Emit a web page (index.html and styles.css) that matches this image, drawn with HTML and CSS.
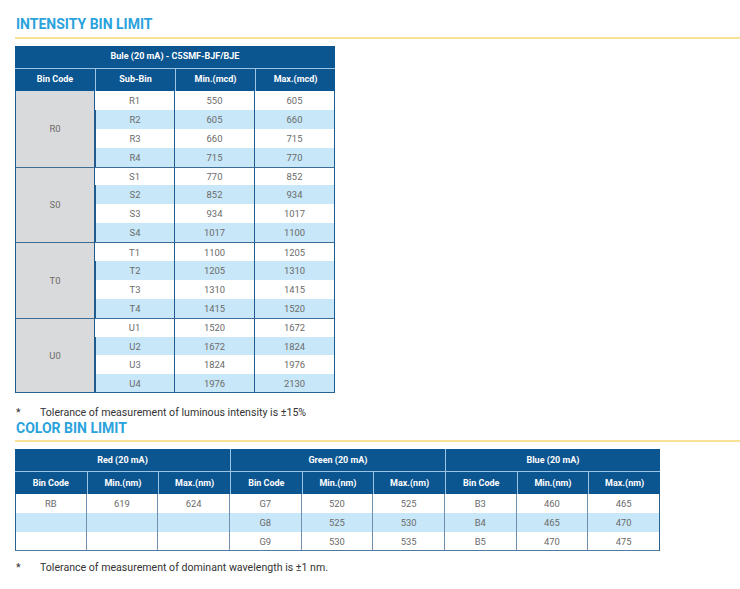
FILE: index.html
```html
<!DOCTYPE html>
<html>
<head>
<meta charset="utf-8">
<link rel="stylesheet" href="styles.css">
</head>
<body>
<div class="page">
  <h2 class="section-title first">INTENSITY BIN LIMIT</h2>
  <table class="bin-table intensity">
    <thead>
      <tr class="cap-row"><th colspan="4">Bule (20 mA) - C5SMF-BJF/BJE</th></tr>
      <tr class="head-row"><th>Bin Code</th><th>Sub-Bin</th><th>Min.(mcd)</th><th>Max.(mcd)</th></tr>
    </thead>
    <tbody>
      <tr class="grp"><td class="code" rowspan="4">R0</td><td>R1</td><td>550</td><td>605</td></tr>
      <tr class="alt"><td>R2</td><td>605</td><td>660</td></tr>
      <tr><td>R3</td><td>660</td><td>715</td></tr>
      <tr class="alt"><td>R4</td><td>715</td><td>770</td></tr>
      <tr class="grp top"><td class="code" rowspan="4">S0</td><td>S1</td><td>770</td><td>852</td></tr>
      <tr class="alt"><td>S2</td><td>852</td><td>934</td></tr>
      <tr><td>S3</td><td>934</td><td>1017</td></tr>
      <tr class="alt"><td>S4</td><td>1017</td><td>1100</td></tr>
      <tr class="grp top"><td class="code" rowspan="4">T0</td><td>T1</td><td>1100</td><td>1205</td></tr>
      <tr class="alt"><td>T2</td><td>1205</td><td>1310</td></tr>
      <tr><td>T3</td><td>1310</td><td>1415</td></tr>
      <tr class="alt"><td>T4</td><td>1415</td><td>1520</td></tr>
      <tr class="grp top"><td class="code last-code" rowspan="4">U0</td><td>U1</td><td>1520</td><td>1672</td></tr>
      <tr class="alt"><td>U2</td><td>1672</td><td>1824</td></tr>
      <tr><td>U3</td><td>1824</td><td>1976</td></tr>
      <tr class="alt last"><td>U4</td><td>1976</td><td>2130</td></tr>
    </tbody>
  </table>
  <p class="note note-1"><span class="star">*</span><span>Tolerance of measurement of luminous intensity is ±15%</span></p>
  <h2 class="section-title second">COLOR BIN LIMIT</h2>
  <table class="bin-table color">
    <thead>
      <tr class="cap-row"><th colspan="3">Red (20 mA)</th><th colspan="3" class="gs">Green (20 mA)</th><th colspan="3" class="gs">Blue (20 mA)</th></tr>
      <tr class="head-row"><th>Bin Code</th><th>Min.(nm)</th><th>Max.(nm)</th><th>Bin Code</th><th>Min.(nm)</th><th>Max.(nm)</th><th>Bin Code</th><th>Min.(nm)</th><th>Max.(nm)</th></tr>
    </thead>
    <tbody>
      <tr><td>RB</td><td>619</td><td>624</td><td>G7</td><td>520</td><td>525</td><td>B3</td><td>460</td><td>465</td></tr>
      <tr class="alt"><td></td><td></td><td></td><td>G8</td><td>525</td><td>530</td><td>B4</td><td>465</td><td>470</td></tr>
      <tr class="last"><td></td><td></td><td></td><td>G9</td><td>530</td><td>535</td><td>B5</td><td>470</td><td>475</td></tr>
    </tbody>
  </table>
  <p class="note note-2"><span class="star">*</span><span>Tolerance of measurement of dominant wavelength is ±1 nm.</span></p>
</div>
</body>
</html>
```
FILE: styles.css
```css
html, body {
  margin: 0;
  padding: 0;
  background: #ffffff;
}
body {
  font-family: Roboto, "Liberation Sans", Arial, sans-serif;
  color: #333333;
}
.page {
  padding: 0 0 0 15px;
}
.section-title {
  margin: 0;
  font-size: 14px;
  font-weight: 700;
  color: #2aa2dc;
  padding-left: 1px;
  border-bottom: 2px solid #f6e395;
}
.section-title.first {
  margin-top: 14.5px;
  line-height: 18px;
  padding-bottom: 4.5px;
}
.section-title.second {
  margin-top: 0.5px;
  line-height: 16px;
  padding-bottom: 4.5px;
}
.bin-table {
  border-collapse: separate;
  border-spacing: 0;
  table-layout: fixed;
  margin-top: 7px;
  text-align: center;
  font-size: 9px;
}
.bin-table.intensity {
  width: 320px;
}
.bin-table.color {
  width: 645px;
}
.bin-table th {
  background: #0b5591;
  color: #ffffff;
  font-weight: 700;
  padding: 0;
  line-height: 11px;
}
.bin-table .cap-row {
  height: 22.5px;
}
.bin-table .cap-row th {
  border-bottom: 1px solid #9cc4e4;
}
.bin-table .cap-row th.gs {
  border-left: 1px solid #9cc4e4;
}
.bin-table .head-row {
  height: 22.5px;
}
.bin-table .head-row th + th {
  border-left: 1px solid #9cc4e4;
}
.bin-table td {
  padding: 0;
  color: #6a6a6a;
  font-size: 9.4px;
  line-height: 11px;
  background: #ffffff;
  border-right: 1px solid #1f5b8c;
}
.bin-table td:first-child {
  border-left: 1px solid #1f5b8c;
}
.bin-table .alt td {
  background: #c8e7f8;
}
.bin-table td.code,
.bin-table .alt td.code {
  background: #d9dadb;
}
.intensity tbody tr {
  height: 18.9px;
}
.intensity tr.top td {
  border-top: 1px solid #3d6d96;
}
.intensity tr.last td,
.intensity td.last-code {
  border-bottom: 1px solid #2a628f;
}
.color tbody tr {
  height: 19px;
}
.color td {
  border-right: 1px solid #6e90ae;
}
.color td:first-child {
  border-left: 1px solid #2a628f;
}
.color td:last-child {
  border-right: 1px solid #2a628f;
}
.color tr.last td {
  border-bottom: 1px solid #4f7aa0;
}
.note {
  display: flex;
  margin: 0;
  font-size: 10.6px;
  line-height: 13px;
  color: #333333;
}
.note .star {
  width: 24px;
  padding-left: 1px;
  flex: none;
}
.note-1 {
  margin-top: 13.2px;
}
.note-2 {
  margin-top: 9.6px;
}
```
